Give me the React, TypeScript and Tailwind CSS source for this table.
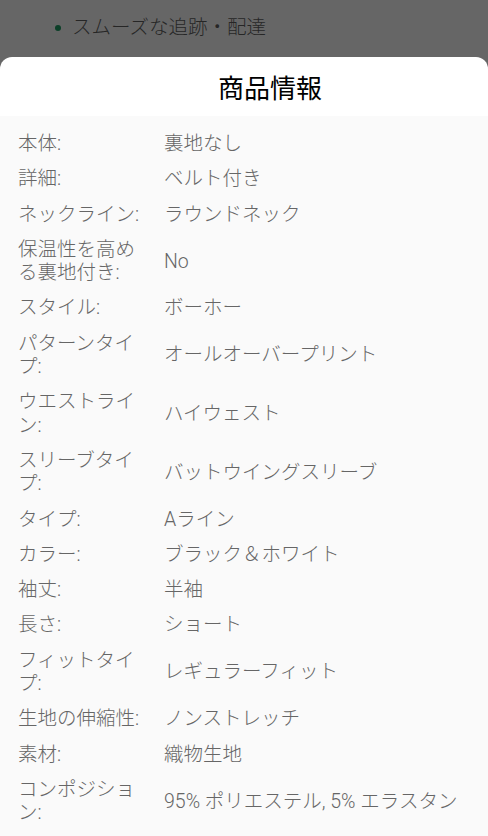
import React from "react";

const rows: [string, string][] = [
  ["本体:", "裏地なし"],
  ["詳細:", "ベルト付き"],
  ["ネックライン:", "ラウンドネック"],
  ["保温性を高める裏地付き:", "No"],
  ["スタイル:", "ボーホー"],
  ["パターンタイプ:", "オールオーバープリント"],
  ["ウエストライン:", "ハイウェスト"],
  ["スリーブタイプ:", "バットウイングスリーブ"],
  ["タイプ:", "Aライン"],
  ["カラー:", "ブラック＆ホワイト"],
  ["袖丈:", "半袖"],
  ["長さ:", "ショート"],
  ["フィットタイプ:", "レギュラーフィット"],
  ["生地の伸縮性:", "ノンストレッチ"],
  ["素材:", "織物生地"],
  ["コンポジション:", "95% ポリエステル, 5% エラスタン"],
];

export default function App() {
  return (
    <div
      className="h-[836px] w-[488px] overflow-hidden bg-[#666666] flex flex-col"
      style={{ fontFamily: 'Roboto, "Noto Sans CJK JP", sans-serif' }}
    >
      <div className="h-[57px] shrink-0 flex items-start pt-[15px] pl-[55px] gap-[11px]">
        <div className="mt-[10px] w-[6px] h-[6px] rounded-full bg-[#0c3f28]" />
        <div className="text-[19.5px] leading-[26px] text-[#262626] font-light">スムーズな追跡・配達</div>
      </div>
      <div className="flex-1 bg-white rounded-t-[12px] flex flex-col">
        <div className="h-[59px] shrink-0 flex items-center justify-center pl-[52px] pt-[5px] text-[26px] text-black">
          商品情報
        </div>
        <div className="flex-1 bg-[#fafafa] pt-[10px]">
          {rows.map(([k, v]) => (
            <div key={k} className="flex items-center py-[6px] text-[19.5px] leading-[23.3px] text-[#666666] font-light">
              <div className="w-[128px] ml-[18px] shrink-0">{k}</div>
              <div className="ml-[18px]">{v}</div>
            </div>
          ))}
        </div>
      </div>
    </div>
  );
}
